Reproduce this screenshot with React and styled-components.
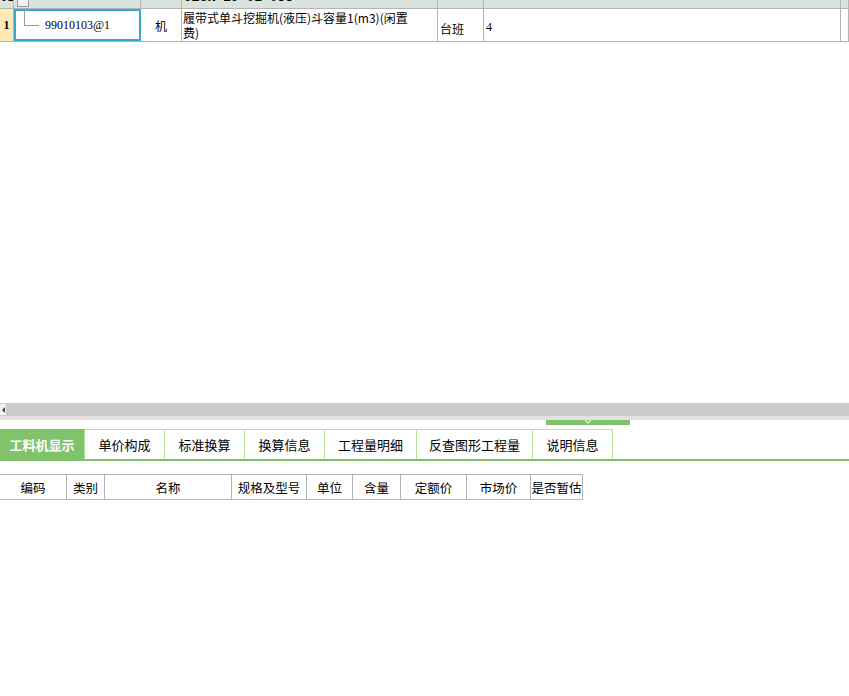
import styled, { createGlobalStyle } from "styled-components";

const Global = createGlobalStyle`
  html, body {
    margin: 0;
    padding: 0;
    background: #ffffff;
  }
  body {
    font-family: "Noto Sans CJK SC", "DejaVu Sans", sans-serif;
    font-size: 12px;
    color: #000;
  }
`;

const Page = styled.div`
  width: 849px;
  height: 696px;
  overflow: hidden;
  display: flex;
  flex-direction: column;
`;

const Grid = styled.div`
  height: 403px;
  display: flex;
  flex-direction: column;
`;

const Row = styled.div`
  display: flex;
  flex: none;
  height: ${(p) => p.h}px;
  background: ${(p) => p.bg || "#fff"};
  border-bottom: 1px solid #b4b4b4;
  overflow: hidden;
`;

const Cell = styled.div`
  width: ${(p) => p.w}px;
  flex: none;
  box-sizing: border-box;
  border-right: 1px solid #b4b4b4;
  display: flex;
  align-items: ${(p) => p.align || "center"};
  justify-content: ${(p) => p.justify || "flex-start"};
  padding-left: ${(p) => p.pl || 0}px;
  background: ${(p) => p.bg || "transparent"};
  font-weight: ${(p) => (p.bold ? 700 : 400)};
  position: relative;
  overflow: hidden;
  white-space: nowrap;
`;

const Cut = styled.span`
  margin-top: -14px;
  font-family: "Liberation Mono", "Noto Sans CJK SC", monospace;
  font-weight: 700;
  font-size: 13px;
`;

const Box = styled.span`
  width: 12px;
  height: 14px;
  margin-top: -8px;
  margin-left: 3px;
  border: 1px solid #9a9a9a;
  background: #f4f4f4;
  box-sizing: border-box;
`;

const Selected = styled.div`
  width: 127px;
  flex: none;
  box-sizing: border-box;
  border: 2px solid #38a7d2;
  display: flex;
  align-items: center;
  padding-left: 29px;
  position: relative;
  font-family: "Liberation Serif", "Noto Sans CJK SC", serif;
  font-size: 12px;
`;

const TreeLine = styled.span`
  position: absolute;
  left: 8px;
  top: -2px;
  width: 14px;
  height: 16px;
  border-left: 1px solid #9a9a9a;
  border-bottom: 1px solid #9a9a9a;
`;

const NameText = styled.div`
  line-height: 15px;
  font-size: 12px;
  padding: 1px 0 0 1px;
  white-space: normal;
`;

const Num = styled.span`
  font-family: "Liberation Serif", serif;
  font-size: 12px;
  font-weight: ${(p) => (p.bold ? 700 : 400)};
  padding-top: ${(p) => p.pt || 0}px;
`;

const Unit = styled.span`
  padding-top: 6px;
`;

const Empty = styled.div`
  flex: 1;
`;

const ScrollBar = styled.div`
  height: 13px;
  background: #cacaca;
  display: flex;
  align-items: center;
`;

const ArrowBtn = styled.div`
  width: 6px;
  height: 11px;
  background: #f2f2f2;
  display: flex;
  align-items: center;
  justify-content: center;
  &::after {
    content: "";
    border-top: 3px solid transparent;
    border-bottom: 3px solid transparent;
    border-right: 3px solid #444;
  }
`;

const Strip = styled.div`
  height: 4px;
  background: #e1e1e1;
`;

const HandleRow = styled.div`
  height: 5px;
  padding-left: 546px;
  display: flex;
`;

const Handle = styled.div`
  width: 84px;
  height: 5px;
  background: #80c36b;
  display: flex;
  justify-content: center;
`;

const Chevron = styled.svg`
  display: block;
`;

const Tabs = styled.div`
  margin-top: 4px;
  height: 30px;
  display: flex;
  border-bottom: 2px solid #80c36b;
`;

const Tab = styled.div`
  width: ${(p) => p.w}px;
  box-sizing: border-box;
  display: flex;
  align-items: center;
  justify-content: center;
  font-size: 13px;
  white-space: nowrap;
  background: ${(p) => (p.active ? "#80c36b" : "#fff")};
  color: ${(p) => (p.active ? "#fff" : "#000")};
  font-weight: ${(p) => (p.active ? 700 : 400)};
  border-top: 1px solid ${(p) => (p.active ? "#80c36b" : "#b2e49c")};
  border-right: 1px solid #b2e49c;
`;

const Table = styled.div`
  margin-top: 13px;
  display: flex;
  height: 24px;
  width: 583px;
  border-top: 1px solid #b4b4b4;
  border-bottom: 1px solid #b4b4b4;
`;

const Th = styled.div`
  width: ${(p) => p.w}px;
  box-sizing: border-box;
  border-right: 1px solid #b4b4b4;
  display: flex;
  align-items: center;
  justify-content: center;
  font-size: 12.5px;
  white-space: nowrap;
`;

const tabs = [
  ["工料机显示", 85],
  ["单价构成", 80],
  ["标准换算", 80],
  ["换算信息", 80],
  ["工程量明细", 92],
  ["反查图形工程量", 116],
  ["说明信息", 80],
];

const cols = [
  ["编码", 67],
  ["类别", 38],
  ["名称", 127],
  ["规格及型号", 75],
  ["单位", 46],
  ["含量", 48],
  ["定额价", 66],
  ["市场价", 64],
  ["是否暂估", 52],
];

const App = () => {
  return (
    <Page>
      <Global />
      <Grid>
        <Row h={8} bg="#dbe3de">
          <Cell w={14} bold>
            <Cut>02</Cut>
          </Cell>
          <Cell w={127}>
            <Box />
          </Cell>
          <Cell w={41} />
          <Cell w={256} pl={2}>
            <Cut>JZGK-1J-01-033</Cut>
          </Cell>
          <Cell w={46} />
          <Cell w={357} />
          <Cell w={8} />
        </Row>
        <Row h={32}>
          <Cell w={14} bg="#fdebb6" justify="center">
            <Num bold>1</Num>
          </Cell>
          <Selected>
            <TreeLine />
            99010103@1
          </Selected>
          <Cell w={41} justify="center">
            机
          </Cell>
          <Cell w={256} align="flex-start">
            <NameText>
              履带式单斗挖掘机(液压)斗容量1(m3)(闲置
              <br />
              费)
            </NameText>
          </Cell>
          <Cell w={46} pl={2}>
            <Unit>台班</Unit>
          </Cell>
          <Cell w={357} pl={2}>
            <Num pt={4}>4</Num>
          </Cell>
          <Cell w={8} />
        </Row>
        <Empty />
      </Grid>
      <ScrollBar>
        <ArrowBtn />
      </ScrollBar>
      <Strip />
      <HandleRow>
        <Handle>
          <Chevron width="10" height="5" viewBox="0 0 10 5">
            <path d="M2 0 L5 3 L8 0" stroke="#e8f5e2" strokeWidth="1.2" fill="none" />
          </Chevron>
        </Handle>
      </HandleRow>
      <Tabs>
        {tabs.map(([t, w], i) => (
          <Tab key={t} w={w} active={i === 0}>
            {t}
          </Tab>
        ))}
      </Tabs>
      <Table>
        {cols.map(([t, w]) => (
          <Th key={t} w={w}>
            {t}
          </Th>
        ))}
      </Table>
    </Page>
  );
};

export default App;
